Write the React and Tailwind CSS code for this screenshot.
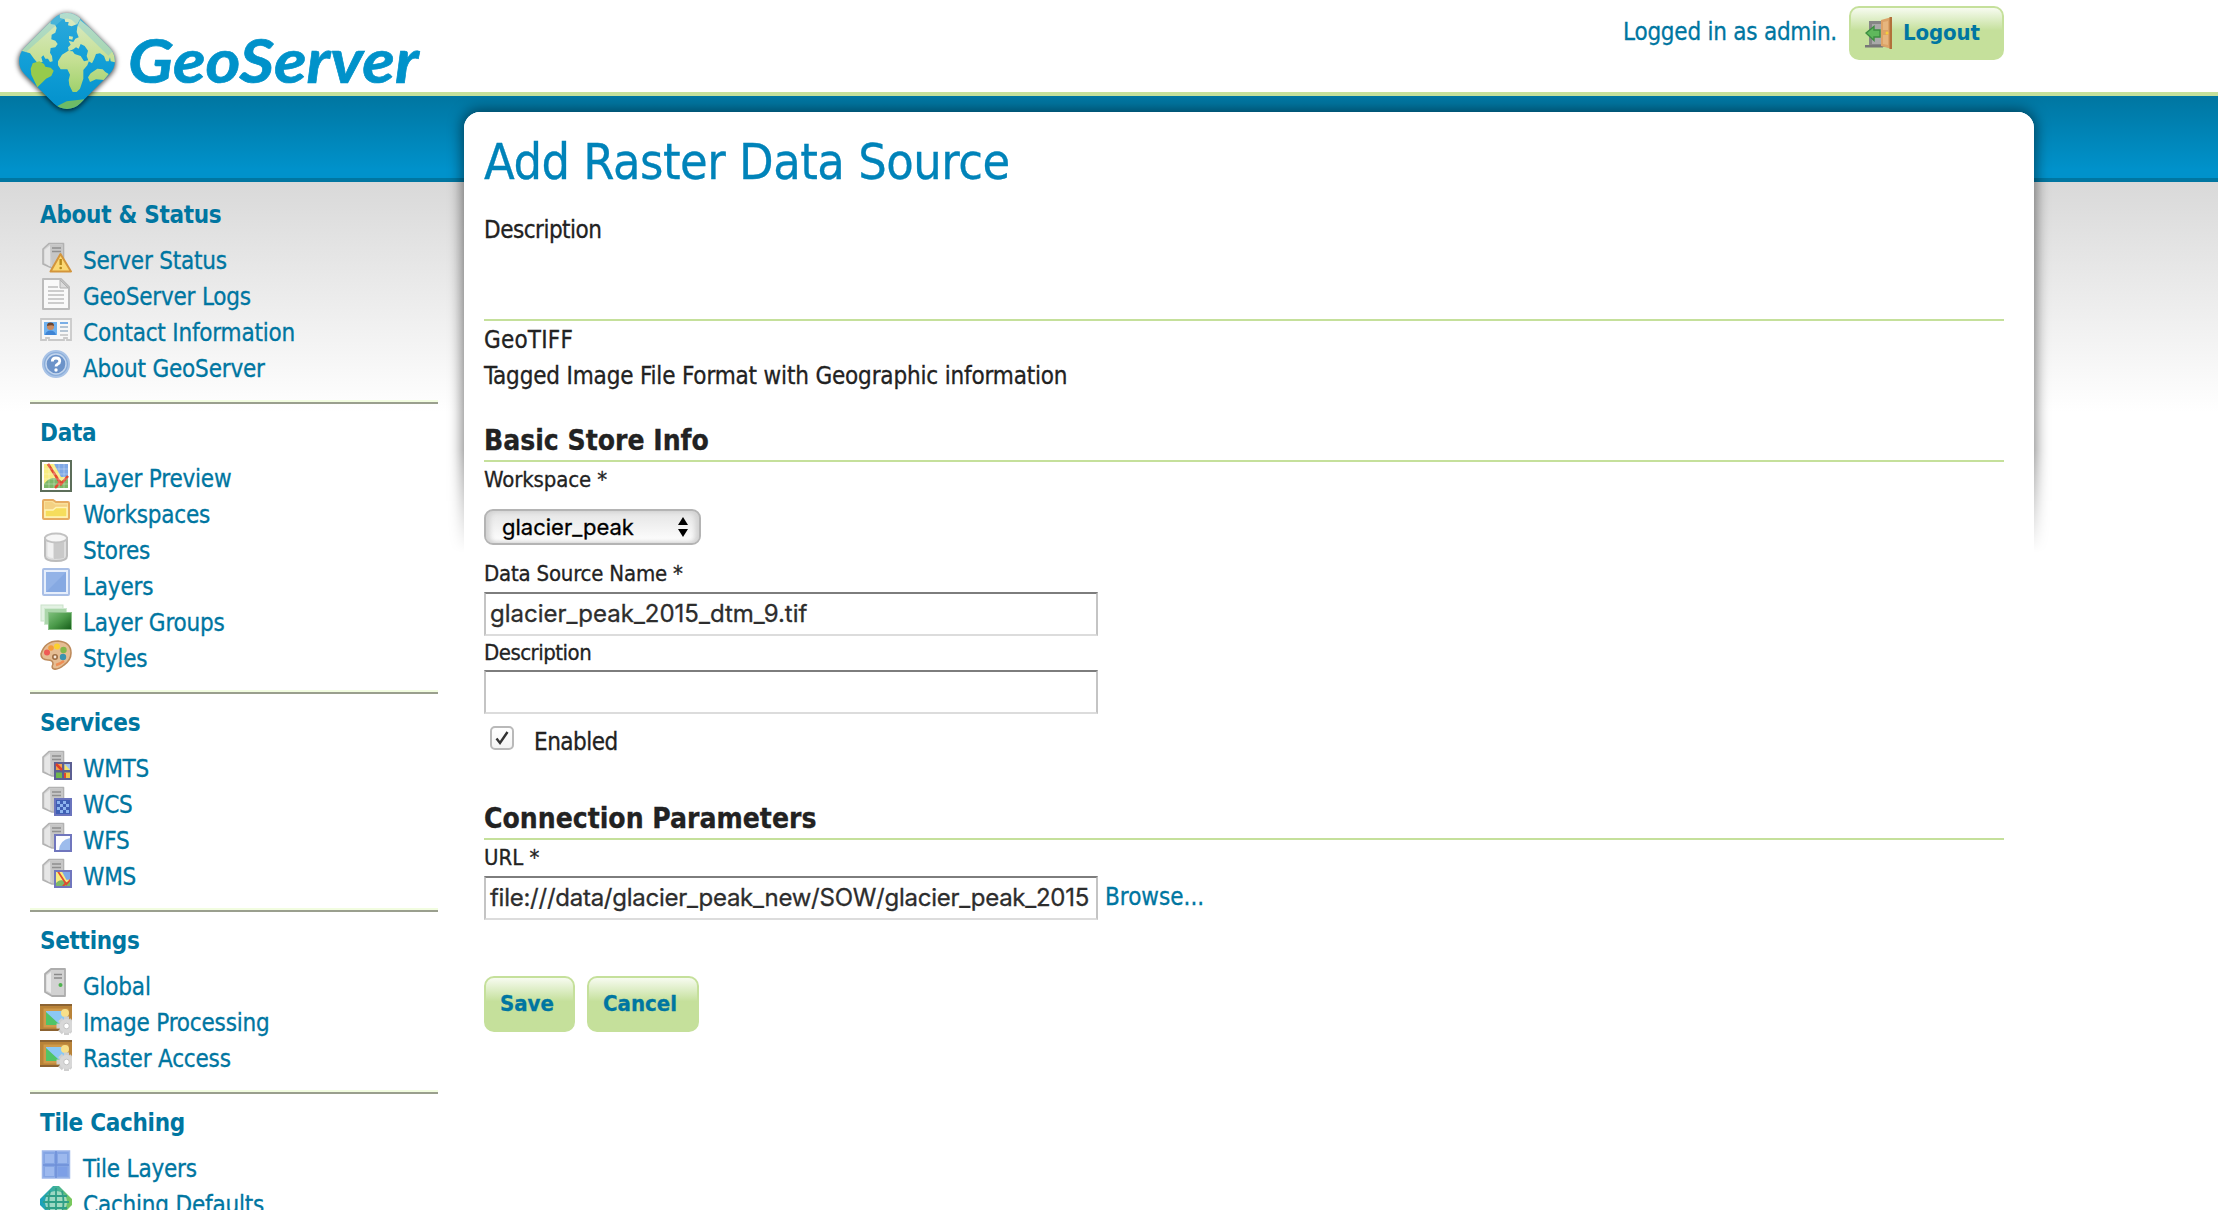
import React from "react";

const SANS = "font-['DejaVu_Sans_Condensed','DejaVu_Sans',sans-serif] [font-stretch:condensed]";

function Svg({ children, box = "0 0 32 32", className = "h-8 w-8" }) {
  return (
    <svg viewBox={box} className={className + " block shrink-0"} aria-hidden="true">
      {children}
    </svg>
  );
}

function ServerBody() {
  return (
    <g>
      <path d="M3 7 L9 1.500 H23.500 V26 H12 L3 22 Z" fill="#d2d2d2" stroke="#b2b2b2" strokeWidth="1.600" strokeLinejoin="round" />
      <path d="M4.500 8 L10 3.500 V24.500 L4.500 21 Z" fill="#e6e6e6" />
      <path d="M10 3 H22.500 V25 H12 Z" fill="#c6c6c6" />
      <path d="M12 6 H21 M12 9.500 H21" stroke="#8f8f8f" strokeWidth="1.700" />
    </g>
  );
}

function MapTile({ x, y, s }) {
  return (
    <g transform={`translate(${x} ${y}) scale(${s / 24})`}>
      <rect width="24" height="24" fill="#f7ec80" />
      <path d="M10 0 H24 V13 L17 13 Z" fill="#7fa8e6" />
      <path d="M0 20 Q5 13 11 14 L18 17 L24 13 V24 H0 Z" fill="#7db868" />
      <path d="M4 0 L17 20 L24 12 M17 17 L11 24" fill="none" stroke="#e2492f" strokeWidth="2.6" />
    </g>
  );
}

const icons = {
  status: (
    <Svg>
      <ServerBody />
      <path d="M20.5 12 L31 29.5 H10.5 Z" fill="#fbd873" stroke="#d3953c" strokeWidth="2" strokeLinejoin="round" />
      <path d="M20.7 17 V23" stroke="#b98a1b" strokeWidth="2.4" />
      <circle cx="20.7" cy="26" r="1.3" fill="#b98a1b" />
    </Svg>
  ),
  logs: (
    <Svg>
      <path d="M3 1 H21 L29 9 V31 H3 Z" fill="#f9f9f9" stroke="#bcbcbc" strokeWidth="2" strokeLinejoin="round" />
      <path d="M20 2 V10 H28 Z" fill="#dcdcdc" stroke="#b0b0b0" strokeWidth="1" />
      <path d="M8 9 H18 M8 13 H24 M8 17 H24 M8 21 H24 M8 25 H24" stroke="#bdbdbd" strokeWidth="1.5" />
    </Svg>
  ),
  contact: (
    <Svg>
      <path d="M1 5 H31 V26 H27 V24 H24 V26 H9 V24 H6 V26 H1 Z" fill="#f7f7f7" stroke="#c9c9c9" strokeWidth="1.8" />
      <rect x="4" y="8" width="13" height="13" fill="#6fb2f0" />
      <circle cx="10.5" cy="12.5" r="3.6" fill="#c98b62" />
      <path d="M7 12 Q7 8.6 10.5 8.6 T14 12 Q12 10.5 7 12" fill="#6b4530" />
      <path d="M5 21 Q6 16.5 10.5 16.5 T16 21 Z" fill="#3f84d4" />
      <path d="M20 9 H28" stroke="#79aee6" strokeWidth="2" />
      <path d="M20 13 H28 M20 17 H28" stroke="#9fb4c8" strokeWidth="1.4" />
      <path d="M20 21 H28" stroke="#bdbdbd" strokeWidth="1.4" />
    </Svg>
  ),
  about: (
    <Svg>
      <circle cx="16" cy="14" r="13" fill="#8aadd9" stroke="#a9c3e6" strokeWidth="2" />
      <circle cx="16" cy="14" r="10" fill="#6c93c9" stroke="#c4d6ee" strokeWidth="1.4" />
      <path d="M12.3 11.5 Q12.3 8 16 8 T19.8 11 Q19.8 13 17.5 14.2 Q16 15 16 16.6" fill="none" stroke="#fff" strokeWidth="2.8" />
      <circle cx="16" cy="20" r="1.7" fill="#fff" />
    </Svg>
  ),
  preview: (
    <Svg>
      <rect x="1" y="1" width="30" height="30" fill="#fff" stroke="#5c6e5a" strokeWidth="2" />
      <MapTile x={4} y={4} s={24} />
      <path d="M4 9 H28 M4 14 H28 M4 19 H28 M4 24 H28 M9 4 V28 M14 4 V28 M19 4 V28 M24 4 V28" stroke="#fff" strokeOpacity=".3" strokeWidth="1" />
    </Svg>
  ),
  workspaces: (
    <Svg>
      <path d="M3 22 V5 Q3 4 4 4 H13 L16 6 H28 Q29 6 29 7 V22 Q29 23 28 23 H4 Q3 23 3 22 Z" fill="#f9e09a" stroke="#e6ac62" strokeWidth="2" />
      <path d="M5 6 H12 L15 8.500 H27 V12 H15 L13 14 H5 Z" fill="#f4d183" />
      <path d="M5 14 H13 L16 11.500 H27 V21 H5 Z" fill="#f6dd5c" stroke="#fff3b8" strokeWidth="1.4" />
    </Svg>
  ),
  stores: (
    <Svg>
      <path d="M5 6 V24 Q5 29 16 29 T27 24 V6 Z" fill="#dedede" stroke="#bcbcbc" strokeWidth="2" />
      <path d="M14 10 H24 V26 Q20 27 14 27 Z" fill="#c9c9c9" />
      <path d="M7.500 10 H13 V26 Q9 26 7.500 24 Z" fill="#f1f1f1" />
      <ellipse cx="16" cy="6" rx="11" ry="4.500" fill="#f6f6f6" stroke="#c2c2c2" strokeWidth="1.8" />
    </Svg>
  ),
  layers: (
    <Svg>
      <rect x="3" y="1" width="26" height="26" rx="1" fill="#e6eefb" stroke="#a9bfe6" strokeWidth="2" />
      <rect x="6" y="4" width="20" height="20" fill="#86a9e2" />
      <path d="M6 4 H26 L6 24 Z" fill="#93b3e7" />
    </Svg>
  ),
  groups: (
    <Svg>
      <defs>
        <linearGradient id="groupFill" x1="0" y1="0" x2="1" y2="1">
          <stop offset="0" stopColor="#7fc07c" />
          <stop offset=".5" stopColor="#4b9a4a" />
          <stop offset="1" stopColor="#145c18" />
        </linearGradient>
      </defs>
      <rect x="1" y="1" width="22" height="16" fill="#e2f1e2" stroke="#c9e2c9" />
      <rect x="4.500" y="4.500" width="22" height="16" fill="#abd6aa" stroke="#cfe8cf" />
      <rect x="8.500" y="8.500" width="23" height="17" fill="url(#groupFill)" stroke="#8cc08a" />
    </Svg>
  ),
  styles: (
    <Svg>
      <path d="M1 14 Q5 1 18 1 Q31 2 31 13 Q31 20 24 25 Q18 30 14 29 Q11 28 13 24 Q13 20 8 20 Q1 20 1 14 Z" fill="#e5bd93" stroke="#bd8a5b" strokeWidth="1.6" />
      <circle cx="7" cy="12.500" r="3" fill="#ef5a55" />
      <circle cx="11" cy="8" r="2.800" fill="#f59b3a" />
      <circle cx="17" cy="6.500" r="3" fill="#fbd02f" />
      <circle cx="23.500" cy="10" r="3.200" fill="#83b84a" />
      <circle cx="23" cy="17" r="3.200" fill="#3a93b0" />
      <circle cx="15" cy="17" r="2.200" fill="#f5e6d6" stroke="#9d6e45" strokeWidth="1.600" />
      <path d="M16 25 Q20 24 24 21" stroke="#ef8e55" strokeWidth="2.500" fill="none" />
    </Svg>
  ),
  wmts: (
    <Svg>
      <ServerBody />
      <rect x="14" y="12" width="18" height="18" fill="#5c5f92" />
      <rect x="16" y="14" width="6" height="6" fill="#f0a24c" />
      <path d="M16 14 L22 20" stroke="#dd3f2c" strokeWidth="2.500" />
      <rect x="24.500" y="14" width="5.500" height="6" fill="#9fc0f0" />
      <path d="M24.500 14 V20 H30" fill="#f5e46a" />
      <rect x="16" y="22.500" width="6" height="5.500" fill="#6fb64e" />
      <rect x="24.500" y="22.500" width="5.500" height="5.500" fill="#eec546" />
      <path d="M25 23 V28" stroke="#e0472f" strokeWidth="2" />
    </Svg>
  ),
  wcs: (
    <Svg>
      <ServerBody />
      <rect x="15" y="13" width="16" height="16" fill="#3f5fb4" stroke="#6a74bd" strokeWidth="2" />
      <path d="M17 15h3v3h-3z M23 15h3v3h-3z M20 18h3v3h-3z M26 18h3v3h-3z M17 21h3v3h-3z M23 21h3v3h-3z M20 24h3v3h-3z M26 24h3v3h-3z" fill="#8db4ee" />
    </Svg>
  ),
  wfs: (
    <Svg>
      <ServerBody />
      <rect x="15" y="13" width="16" height="16" fill="#fbfcff" stroke="#7076bd" strokeWidth="2" />
      <path d="M30 15 V28 H19 Q20 18 30 16 Z" fill="#9dbcec" />
    </Svg>
  ),
  wms: (
    <Svg>
      <ServerBody />
      <MapTile x={15} y={13} s={16} />
      <rect x="15" y="13" width="16" height="16" fill="none" stroke="#7076bd" strokeWidth="2" />
    </Svg>
  ),
  global: (
    <Svg>
      <path d="M5 6 L11 1 H25 V28 H12 L5 24 Z" fill="#d2d2d2" stroke="#adadad" strokeWidth="1.800" strokeLinejoin="round" />
      <path d="M6.500 7.500 L11 4 V25 L6.500 22.500 Z" fill="#ececec" />
      <path d="M14 6.500 H22 M14 10 H22" stroke="#8a8a8a" strokeWidth="1.600" />
      <circle cx="20.500" cy="17" r="2" fill="#4eb24e" />
    </Svg>
  ),
  image: (
    <Svg>
      <path d="M0 1 H32 V27 H0 Z" fill="#b98338" />
      <path d="M0 1 H32 M0 26 H20" stroke="#8c6332" strokeWidth="2" />
      <rect x="3.500" y="4.500" width="25" height="19" fill="#cf9a4a" />
      <rect x="6" y="7" width="21" height="14" fill="#8cc8f4" />
      <path d="M6 8 L18 19 L22 21 H6 Z" fill="#4fc467" />
      <circle cx="25" cy="9" r="4" fill="#f8e089" />
      <g stroke="#cfcfcf" strokeWidth="5">
        <path d="M26.500 12.500 V31 M16.500 22 H32 M20 15.500 L32 28 M32 16 L20 28.500" />
      </g>
      <circle cx="26.500" cy="22" r="7" fill="#d8d8d8" />
      <circle cx="26.500" cy="22" r="2.800" fill="#fff" stroke="#c4c4c4" />
    </Svg>
  ),
  tiles: (
    <Svg>
      <rect x="2.500" y="1" width="27" height="27" fill="#84a5e4" stroke="#9db7ea" strokeWidth="1.500" />
      <path d="M5 4 H14 V13 H5 Z M18 4 H27 V13 H18 Z M5 17 H14 V26 H5 Z" fill="#9db9ee" />
      <path d="M18 17 H27 V26 H18 Z" fill="#7d9fe6" />
      <path d="M16 1 V28 M3 15 H29" stroke="#6f90d8" strokeWidth="1.500" />
    </Svg>
  ),
  caching: (
    <Svg>
      <defs>
        <linearGradient id="cacheFill" x1="0" x2="1">
          <stop offset="0" stopColor="#17a0bd" />
          <stop offset=".6" stopColor="#48b493" />
          <stop offset="1" stopColor="#7cc957" />
        </linearGradient>
      </defs>
      <path d="M13 0 H19 L32 13 V19 L19 32 H13 L0 19 V13 Z" fill="url(#cacheFill)" />
      <circle cx="16" cy="16" r="11" fill="#bfe6cf" fillOpacity=".75" />
      <path d="M16 2 V30 M3 16 H29 M5 10 H27 M5 22 H27 M10 5 Q7 16 10 27 M22 5 Q25 16 22 27" fill="none" stroke="#2f9f87" strokeWidth="1.800" />
    </Svg>
  ),
};

const sections = [
  ["About & Status", [["status", "Server Status"], ["logs", "GeoServer Logs"], ["contact", "Contact Information"], ["about", "About GeoServer"]]],
  ["Data", [["preview", "Layer Preview"], ["workspaces", "Workspaces"], ["stores", "Stores"], ["layers", "Layers"], ["groups", "Layer Groups"], ["styles", "Styles"]]],
  ["Services", [["wmts", "WMTS"], ["wcs", "WCS"], ["wfs", "WFS"], ["wms", "WMS"]]],
  ["Settings", [["global", "Global"], ["image", "Image Processing"], ["image", "Raster Access"]]],
  ["Tile Caching", [["tiles", "Tile Layers"], ["caching", "Caching Defaults"]]],
];

function Logo() {
  return (
    <svg viewBox="0 0 1320 360" className="block h-[120px] w-[440px]" role="img" aria-label="GeoServer">
      <defs>
        <linearGradient id="sea" x1="0" y1="0" x2="0" y2="1">
          <stop offset="0" stopColor="#33aadb" />
          <stop offset=".45" stopColor="#14a0d8" />
          <stop offset="1" stopColor="#008fca" />
        </linearGradient>
        <linearGradient id="land" gradientUnits="userSpaceOnUse" x1="0" y1="40" x2="0" y2="326">
          <stop offset="0" stopColor="#dcebc8" />
          <stop offset=".5" stopColor="#c4df92" />
          <stop offset="1" stopColor="#8cca58" />
        </linearGradient>
        <clipPath id="gem">
          <rect x="83" y="65" width="236" height="236" rx="56" transform="rotate(45 201 183)" />
        </clipPath>
        <filter id="gemShadow" x="-20%" y="-20%" width="140%" height="140%">
          <feGaussianBlur stdDeviation="8" />
        </filter>
      </defs>
      <rect x="81" y="66" width="240" height="240" rx="56" transform="rotate(45 201 186)" fill="#000" fillOpacity=".7" filter="url(#gemShadow)" />
      <g clipPath="url(#gem)">
        <rect x="40" y="20" width="330" height="330" fill="url(#sea)" />
        <g fill="url(#land)">
          <path d="M178 30 H240 V58 L232 72 L215 79 L204 76 L206 66 L196 66 L194 58 L180 54 Z" />
          <path d="M152 72 L165 74 L170 84 L166 98 L155 104 L154 118 L166 122 L173 132 L166 142 L152 144 L150 158 L156 168 L158 184 L150 186 L144 176 L136 176 L130 166 L124 172 L128 186 L112 188 L102 176 L90 160 L70 154 L50 150 L60 100 L150 20 Z" />
          <path d="M98 190 L118 184 L132 192 L136 200 L152 203 L161 212 L154 228 L138 236 L126 248 L112 262 L94 224 L92 206 Z" fill="#97cb4c" />
          <path d="M174 184 L186 164 L204 153 L218 154 L224 162 L242 168 L252 184 L268 180 L262 196 L250 210 L250 236 L240 266 L230 276 L218 276 L208 256 L206 240 L210 224 L202 208 L182 208 L174 196 Z" />
          <path d="M240 60 L350 150 V188 L332 184 L330 172 L326 184 L318 184 L312 168 L300 160 L288 162 L282 178 L276 190 L266 184 L260 168 L264 152 L254 138 L242 132 L236 146 L228 142 L220 148 L206 154 L204 142 L212 134 L206 122 L220 126 L226 116 L236 112 L230 96 L232 80 Z" />
          <path d="M264 232 L272 220 L292 206 L308 208 L316 216 L326 222 L312 240 L288 238 L270 246 Z" />
          <path d="M172 318 L200 304 L252 298 L250 340 H180 Z" fill="#6dbb66" />
          <path d="M207 108 l12 2 l-2 9 l-10 -2z" />
        </g>
        <path d="M70 150 L180 52 Q201 38 222 52 L332 160" fill="none" stroke="#79c8d8" strokeOpacity=".4" strokeWidth="20" />
      </g>
      <text x="384" y="250" fontSize="186" textLength="872" lengthAdjust="spacingAndGlyphs" fill="#0092ca" stroke="#0092ca" strokeWidth="2" className="font-['Lato',sans-serif] font-bold italic">
        GeoServer
      </text>
    </svg>
  );
}

function DoorIcon() {
  return (
    <Svg>
      <path d="M4 4 H20 V30 H4 Z" fill="#868686" />
      <path d="M7 7 H17 V27 H7 Z" fill="#a9a9a9" />
      <path d="M0 28 H18 V30.500 H0 Z" fill="#777" />
      <path d="M1 16 L9 9.500 V13 H15 V20 H9 V23.500 Z" fill="#5fb85c" stroke="#3c8d40" strokeWidth="1.400" />
      <path d="M16 3 L27 0 V32 L16 29 Z" fill="#dca267" />
      <path d="M24.500 0 H27 V32 H24.500 Z" fill="#b2703a" />
      <path d="M18 5 L23 4 V13 L18 13 Z M18 18 H23 V28 L18 27 Z" fill="#e6b57e" />
      <circle cx="22" cy="16" r="1.500" fill="#f6cf3a" />
    </Svg>
  );
}

const BUTTON =
  "rounded-[10px] border-2 border-[#c5e09b] bg-linear-to-b from-[#f7fbf0] to-[#c5e09b] to-45% font-bold text-[#0076a1]";
const FIELD =
  "block h-11 w-[614px] whitespace-nowrap border-2 border-[#c4c4c4] border-t-[#7d7d7d] border-b-[#dcdcdc] bg-white px-1 font-['Inter',sans-serif] text-[24px] leading-[40px] text-[#2d2d2d]";
const LABEL = "block text-[22px] leading-[34px]";
const HEADING = "border-b-2 border-[#c5e09b] pb-0.5 text-[28px] leading-[34px] font-bold";

function Sidebar() {
  return (
    <nav className="ml-[30px] w-[408px] shrink-0 pt-1 text-[24px] leading-[36px] text-[#0076a1]">
      {sections.map(([title, items]) => (
        <section key={title} className="border-b-2 border-[#9a9f8e]">
          <div className="border-b-2 border-[#f2fde0] pt-[11px] pb-[13px] pl-2.5">
            <h2 className="mb-2.5 font-bold tracking-[-0.3px]">{title}</h2>
            <ul>
              {items.map(([icon, label]) => (
                <li key={label} className="flex h-9 items-start gap-[11px] whitespace-nowrap">
                  <span className="-mt-px">{icons[icon]}</span>
                  <a className="tracking-[-0.2px] [-webkit-text-stroke:0.3px]">{label}</a>
                </li>
              ))}
            </ul>
          </div>
        </section>
      ))}
    </nav>
  );
}

export default function App() {
  return (
    <div className={`${SANS} relative h-[1210px] w-full overflow-hidden bg-white text-[24px] leading-[36px] text-[#222]`}>
      <header className="relative z-10 flex h-[92px] items-start justify-between pr-[214px]">
        <Logo />
        <div className="flex items-start pt-1.5">
          <span className="mt-2 mr-3 whitespace-nowrap text-[#0076a1] tracking-[-0.24px] [-webkit-text-stroke:0.3px]">Logged in as admin.</span>
          <button className={`${BUTTON} flex h-[54px] w-[155px] items-center pl-3.5`}>
            <DoorIcon />
            <span className="ml-1.5 text-[22px] tracking-[-0.1px]">Logout</span>
          </button>
        </div>
      </header>
      <div className="h-1 bg-[#c5e09b]" />
      <div className="h-[86px] border-b-4 border-[#0076a1] bg-linear-to-b from-[#0076a1] to-[#0092cb] to-90%" />
      <div className="h-[230px] bg-linear-to-b from-[#d9d9d9] to-white" />

      <div className="relative -mt-[300px] flex items-start">
        <div className="pt-[70px]">
          <Sidebar />
        </div>
        <main className="relative ml-[26px] w-[1570px] shrink-0">
          <div className="absolute -inset-x-6 -top-[16px] h-[466px] overflow-hidden px-6 pt-[16px] [mask-image:linear-gradient(to_bottom,black_76%,transparent_98%)]">
            <div className="h-[520px] rounded-2xl bg-white shadow-[0_0_14px_2px_rgba(0,0,0,0.5)]" />
          </div>
          <div className="relative rounded-2xl bg-white pt-5 pr-[30px] pl-5 [-webkit-text-stroke:0.3px]">
            <h1 className="text-[50px] leading-[60px] tracking-[-0.5px] text-[#0083b9]">Add Raster Data Source</h1>
            <p className="mt-5 tracking-[-0.5px]">Description</p>
            <hr className="mt-[71px] border-t-2 border-[#c5e09b]" />
            <p className="mt-px tracking-[0.2px]">GeoTIFF</p>
            <p className="tracking-[-0.17px]">Tagged Image File Format with Geographic information</p>

            <h2 className={`${HEADING} mt-[30px]`}>Basic Store Info</h2>
            <label className={`${LABEL} mt-px tracking-[-0.1px]`}>Workspace *</label>
            <div className="mt-3 flex h-9 w-[217px] items-center justify-between rounded-[9px] border-2 border-[#b4b4b4] bg-linear-to-b from-[#e4e4e4] to-white pr-2.5 pl-4 font-['Inter',sans-serif] text-[22px] leading-8 text-black shadow-[inset_4px_0_5px_#d2d2d2,inset_-4px_0_5px_#d2d2d2]">
              <span>glacier_peak</span>
              <Svg box="0 0 12 22" className="h-[22px] w-3">
                <path d="M6 1 L11 9 H1 Z M6 21 L11 13 H1 Z" fill="#000" />
              </Svg>
            </div>
            <label className={`${LABEL} mt-3 tracking-[-0.2px]`}>Data Source Name *</label>
            <div className={`${FIELD} mt-px`}>glacier_peak_2015_dtm_9.tif</div>
            <label className={`${LABEL} tracking-[-0.5px]`}>Description</label>
            <div className={FIELD} />
            <div className="mt-2.5 flex h-9 items-start">
              <span className="mt-0.5 ml-1.5 flex h-6 w-6 items-center justify-center rounded-[5px] border-2 border-[#b9b9b9] bg-linear-to-b from-white to-[#f4f4f4]">
                <Svg box="0 0 16 16" className="h-4 w-4">
                  <path d="M2.500 8.500 L6 13 L13.500 2" fill="none" stroke="#333" strokeWidth="2.400" />
                </Svg>
              </span>
              <span className="ml-5 tracking-[-0.5px]">Enabled</span>
            </div>

            <h2 className={`${HEADING} mt-[42px]`}>Connection Parameters</h2>
            <label className={`${LABEL} mt-px`}>URL *</label>
            <div className="mt-px flex items-start">
              <div className={`${FIELD} tracking-[-0.26px]`}>file:///data/glacier_peak_new/SOW/glacier_peak_2015</div>
              <a className="mt-[3px] ml-[7px] text-[#0076a1]">Browse...</a>
            </div>
            <div className="mt-14 flex gap-3">
              <button className={`${BUTTON} h-14 w-[91px] pl-3.5 text-left text-[22px]`}>Save</button>
              <button className={`${BUTTON} h-14 w-[112px] pl-3.5 text-left text-[22px]`}>Cancel</button>
            </div>
          </div>
        </main>
      </div>
    </div>
  );
}
